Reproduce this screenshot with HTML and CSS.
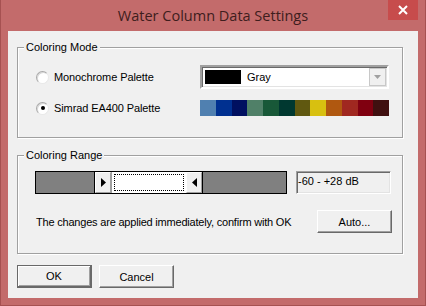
FILE: index.html
```html
<!DOCTYPE html>
<html lang="en">
<head>
    <meta charset="UTF-8">
    <title>Water Column Data Settings</title>
    <link rel="stylesheet" href="styles.css">
</head>
<body>

    <div class="window">
        <div class="titlebar">
            <div class="title-spacer"></div>
            <div class="title">Water Column Data Settings</div>
            <div class="close-btn">
                <svg width="10" height="10" viewBox="0 0 10 10">
                    <path d="M1 1 L9 9 M9 1 L1 9" stroke="#fff" stroke-width="2" fill="none"/>
                </svg>
            </div>
        </div>

        <div class="client">
            <div class="group mode-group">
                <div class="group-title">Coloring Mode</div>
                <div class="mode-grid">
                    <label class="radio-row">
                        <span class="radio"></span>
                        Monochrome Palette
                    </label>
                    <div class="combo">
                        <span class="swatch"></span>
                        <span class="combo-text">Gray</span>
                        <span class="combo-btn">
                            <svg width="7" height="4" viewBox="0 0 7 4"><path d="M0 0 H7 L3.5 4 Z" fill="#a0a0a0"/></svg>
                        </span>
                    </div>

                    <label class="radio-row">
                        <span class="radio checked"></span>
                        Simrad EA400 Palette
                    </label>
                    <div class="palette">
                        <span style="background:#5080b0"></span>
                        <span style="background:#003090"></span>
                        <span style="background:#001060"></span>
                        <span style="background:#508068"></span>
                        <span style="background:#185838"></span>
                        <span style="background:#003830"></span>
                        <span style="background:#605810"></span>
                        <span style="background:#d8c010"></span>
                        <span style="background:#b05810"></span>
                        <span style="background:#a02820"></span>
                        <span style="background:#800010"></span>
                        <span style="background:#401010"></span>
                    </div>
                </div>
            </div>

            <div class="group range-group">
                <div class="group-title">Coloring Range</div>
                <div class="range-grid">
                    <div class="slider">
                        <div class="track track-left"></div>
                        <div class="thumb">
                            <svg width="5" height="9" viewBox="0 0 5 9"><path d="M0 0 L5 4.5 L0 9 Z" fill="#000"/></svg>
                        </div>
                        <div class="selection"><div class="focus"></div></div>
                        <div class="thumb">
                            <svg width="5" height="9" viewBox="0 0 5 9"><path d="M5 0 L0 4.5 L5 9 Z" fill="#000"/></svg>
                        </div>
                        <div class="track track-right"></div>
                    </div>
                    <div class="readout">-60 - +28 dB</div>

                    <div class="hint">The changes are applied immediately, confirm with OK</div>
                    <button class="btn auto-btn">Auto...</button>
                </div>
            </div>

            <div class="buttons">
                <button class="btn default-btn">OK</button>
                <button class="btn">Cancel</button>
            </div>
        </div>
    </div>

</body>
</html>
```

FILE: styles.css
```css
body {
    margin: 0;
    font-family: "Liberation Sans", Arial, sans-serif;
    font-size: 11px;
    color: #000;
}

.window {
    box-sizing: border-box;
    width: 426px;
    height: 306px;
    background-color: #c36b6b;
    border: 1px solid #a65151;
    border-top: none;
    padding: 0 7px 7px 7px;
    display: flex;
    flex-direction: column;
}

.titlebar {
    height: 31px;
    flex: none;
    display: flex;
    align-items: flex-start;
}

.title-spacer {
    width: 30px;
}

.title {
    flex: 1;
    text-align: center;
    font-family: "Open Sans", "Noto Sans", sans-serif;
    font-size: 14.5px;
    line-height: 31px;
    color: #3e1d1d;
}

.close-btn {
    width: 30px;
    height: 20px;
    background-color: #c74c4c;
    display: flex;
    align-items: center;
    justify-content: center;
}

.client {
    flex: 1;
    background-color: #f0f0f0;
    padding: 16px 15px 0 9px;
}

.group {
    box-sizing: border-box;
    border: 1px solid #a0a0a0;
    box-shadow: 1px 1px 0 #fff, inset 1px 1px 0 #fff;
}

.mode-group {
    height: 91px;
}

.range-group {
    height: 99px;
    margin-top: 17px;
}

.group-title {
    width: fit-content;
    margin: -7px 0 0 6px;
    padding: 0 2px;
    line-height: 13px;
    background-color: #f0f0f0;
}

.mode-grid {
    display: grid;
    grid-template-columns: 164px 189px;
    grid-template-rows: 24px 16px;
    row-gap: 11px;
    align-items: center;
    padding: 11px 0 0 18px;
}

.radio-row {
    display: flex;
    align-items: center;
    gap: 5px;
    letter-spacing: -0.1px;
}

.radio {
    box-sizing: border-box;
    width: 13px;
    height: 13px;
    border-radius: 50%;
    border: 1px solid #a8a8a8;
    border-right-color: #e8e8e8;
    border-bottom-color: #e8e8e8;
    background-color: #fff;
    box-shadow: inset 1px 1px 0 #d8d8d8;
    display: flex;
    align-items: center;
    justify-content: center;
}

.radio.checked::after {
    content: "";
    width: 4px;
    height: 4px;
    border-radius: 50%;
    background-color: #000;
}

.combo {
    box-sizing: border-box;
    height: 24px;
    display: flex;
    align-items: center;
    background-color: #fff;
    border: 2px solid #696969;
    border-top-color: #a0a0a0;
    border-left-color: #a0a0a0;
    border-right-color: #fff;
    border-bottom-color: #fff;
    box-shadow: inset 1px 1px 0 #696969, inset -1px -1px 0 #e3e3e3;
    padding: 0 1px 0 3px;
}

.swatch {
    width: 36px;
    height: 14px;
    background-color: #000;
}

.combo-text {
    flex: 1;
    padding-left: 6px;
}

.combo-btn {
    box-sizing: border-box;
    width: 17px;
    height: 18px;
    background-color: #f0f0f0;
    border: 1px solid #c8c8c8;
    display: flex;
    align-items: center;
    justify-content: center;
}

.palette {
    display: flex;
    height: 16px;
}

.palette span {
    flex: 1;
}

.range-grid {
    display: grid;
    grid-template-columns: 252px 95px;
    grid-template-rows: 23px 23px;
    column-gap: 9px;
    row-gap: 16px;
    align-items: center;
    padding: 9px 0 0 17px;
}

.slider {
    box-sizing: border-box;
    height: 23px;
    border: 1px solid #000;
    display: flex;
}

.track {
    background-color: #808080;
}

.track-left {
    width: 58px;
    border-right: 1px solid #000;
}

.track-right {
    flex: 1;
    border-left: 1px solid #000;
}

.thumb {
    box-sizing: border-box;
    width: 16px;
    background-color: #f0f0f0;
    border-top: 1px solid #fff;
    border-left: 1px solid #fff;
    border-right: 1px solid #a0a0a0;
    border-bottom: 1px solid #a0a0a0;
    display: flex;
    align-items: center;
    justify-content: center;
}

.selection {
    box-sizing: border-box;
    width: 75px;
    background-color: #fff;
    border-left: 1px solid #a0a0a0;
    padding: 2px;
}

.focus {
    box-sizing: border-box;
    height: 100%;
    border: 1px dotted #000;
}

.readout {
    box-sizing: border-box;
    height: 23px;
    line-height: 19px;
    padding-left: 1px;
    background-color: #f0f0f0;
    border: 1px solid #a0a0a0;
    border-right-color: #fff;
    border-bottom-color: #fff;
    box-shadow: inset 1px 1px 0 #696969, inset -1px -1px 0 #e3e3e3;
}

.hint {
    padding-left: 1px;
    white-space: nowrap;
    letter-spacing: -0.2px;
}

.btn {
    box-sizing: border-box;
    width: 75px;
    height: 23px;
    padding: 0;
    font-family: "Liberation Sans", Arial, sans-serif;
    font-size: 11px;
    color: #000;
    background-color: #f0f0f0;
    border: 1px solid #fff;
    border-right-color: #696969;
    border-bottom-color: #696969;
    box-shadow: inset -1px -1px 0 #a0a0a0;
}

.auto-btn {
    justify-self: end;
    margin-right: -1px;
}

.default-btn {
    border: 2px solid #696969;
    border-top-width: 1px;
    border-left-width: 1px;
    box-shadow: inset 1px 1px 0 #fff, inset -1px -1px 0 #a0a0a0;
}

.buttons {
    display: flex;
    gap: 7px;
    margin-top: 11px;
}
```
